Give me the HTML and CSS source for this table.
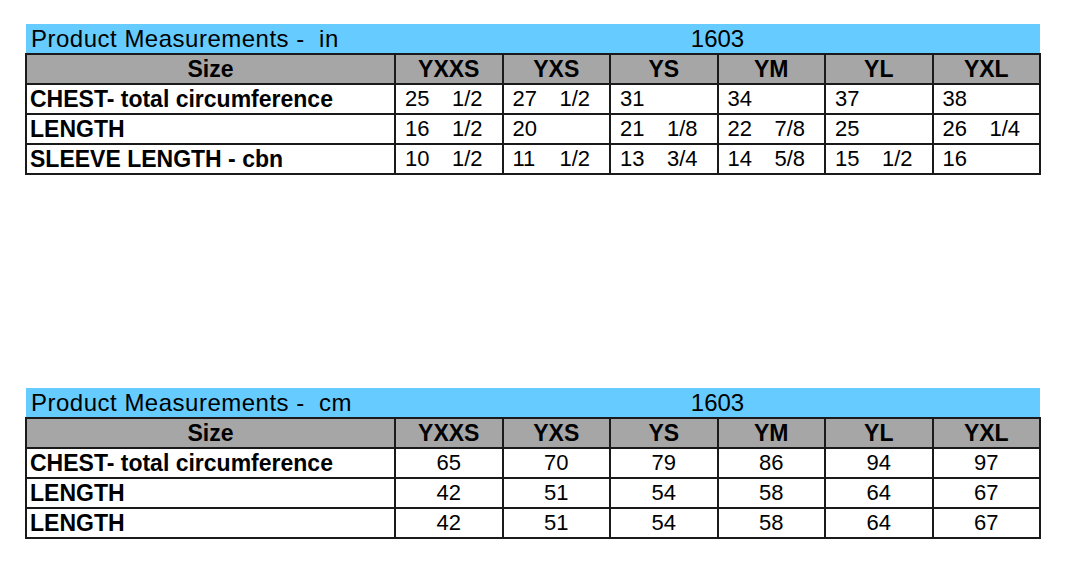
FILE: index.html
```html
<!DOCTYPE html>
<html>
<head>
<meta charset="utf-8">
<title>Product Measurements</title>
<link rel="stylesheet" href="styles.css">
</head>
<body>
<div class="page">
  <table class="chart">
    <colgroup>
      <col class="c-label">
      <col class="c-size"><col class="c-size"><col class="c-size"><col class="c-size"><col class="c-size"><col class="c-size">
    </colgroup>
    <tr class="title">
      <td class="t-name">Product Measurements -&nbsp; in</td>
      <td class="t-code" colspan="6">1603</td>
    </tr>
    <tr class="head">
      <th>Size</th><th>YXXS</th><th>YXS</th><th>YS</th><th>YM</th><th>YL</th><th>YXL</th>
    </tr>
    <tr>
      <td class="label">CHEST- total circumference</td>
      <td class="frac"><span class="int">25</span>1/2</td>
      <td class="frac"><span class="int">27</span>1/2</td>
      <td class="frac"><span class="int">31</span></td>
      <td class="frac"><span class="int">34</span></td>
      <td class="frac"><span class="int">37</span></td>
      <td class="frac"><span class="int">38</span></td>
    </tr>
    <tr>
      <td class="label">LENGTH</td>
      <td class="frac"><span class="int">16</span>1/2</td>
      <td class="frac"><span class="int">20</span></td>
      <td class="frac"><span class="int">21</span>1/8</td>
      <td class="frac"><span class="int">22</span>7/8</td>
      <td class="frac"><span class="int">25</span></td>
      <td class="frac"><span class="int">26</span>1/4</td>
    </tr>
    <tr>
      <td class="label">SLEEVE LENGTH - cbn</td>
      <td class="frac"><span class="int">10</span>1/2</td>
      <td class="frac"><span class="int">11</span>1/2</td>
      <td class="frac"><span class="int">13</span>3/4</td>
      <td class="frac"><span class="int">14</span>5/8</td>
      <td class="frac"><span class="int">15</span>1/2</td>
      <td class="frac"><span class="int">16</span></td>
    </tr>
  </table>

  <table class="chart">
    <colgroup>
      <col class="c-label">
      <col class="c-size"><col class="c-size"><col class="c-size"><col class="c-size"><col class="c-size"><col class="c-size">
    </colgroup>
    <tr class="title">
      <td class="t-name">Product Measurements -&nbsp; cm</td>
      <td class="t-code" colspan="6">1603</td>
    </tr>
    <tr class="head">
      <th>Size</th><th>YXXS</th><th>YXS</th><th>YS</th><th>YM</th><th>YL</th><th>YXL</th>
    </tr>
    <tr>
      <td class="label">CHEST- total circumference</td>
      <td class="num">65</td><td class="num">70</td><td class="num">79</td><td class="num">86</td><td class="num">94</td><td class="num">97</td>
    </tr>
    <tr>
      <td class="label">LENGTH</td>
      <td class="num">42</td><td class="num">51</td><td class="num">54</td><td class="num">58</td><td class="num">64</td><td class="num">67</td>
    </tr>
    <tr>
      <td class="label">LENGTH</td>
      <td class="num">42</td><td class="num">51</td><td class="num">54</td><td class="num">58</td><td class="num">64</td><td class="num">67</td>
    </tr>
  </table>
</div>
</body>
</html>
```

FILE: styles.css
```css
html, body {
  margin: 0;
  padding: 0;
  background: #ffffff;
}

.page {
  display: flex;
  flex-direction: column;
  gap: 213px;
  padding: 24px 0 0 25px;
  font-family: "Liberation Sans", Arial, sans-serif;
  color: #000;
}

.chart {
  width: 1014px;
  border-collapse: collapse;
  table-layout: fixed;
}

.c-label { width: 369px; }
.c-size { width: 107.5px; }

.chart tr { height: 30px; }

.chart td, .chart th {
  padding: 0;
  font-size: 22px;
  line-height: 26px;
  white-space: pre;
  overflow: hidden;
}

.chart .title td {
  background: #66ccff;
  border: none;
  font-weight: normal;
  font-size: 24px;
}

.chart .t-name {
  padding-left: 5px;
  text-align: left;
  letter-spacing: 0.5px;
}

.chart .t-code {
  text-align: center;
}

.chart .head th {
  background: #a6a6a6;
  border: 2px solid #1a1a1a;
  font-weight: bold;
  font-size: 23px;
  text-align: center;
}

.chart .label,
.chart .frac,
.chart .num {
  border: 2px solid #1a1a1a;
}

.chart .label {
  font-weight: bold;
  font-size: 23px;
  padding-left: 3px;
  text-align: left;
}

.chart .frac {
  padding-left: 9px;
  text-align: left;
}

.int {
  display: inline-block;
  width: 47px;
}

.chart .num {
  text-align: center;
}
```
